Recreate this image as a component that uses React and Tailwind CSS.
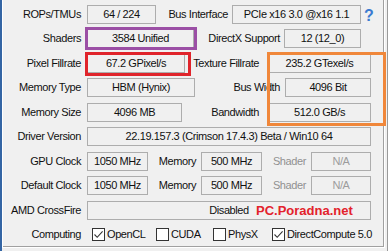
const Field = ({ className = "", children, muted }) => (
    <div className={`relative h-[19px] shrink-0 border border-[#adadad] flex items-center justify-center whitespace-nowrap ${muted ? "text-[#9c9c9c]" : "text-[#111]"} ${className}`}>
        {children}
    </div>
)

const Label = ({ className = "", children, muted }) => (
    <div className={`shrink-0 text-right whitespace-nowrap ${muted ? "text-[#909090]" : "text-[#111]"} ${className}`}>
        {children}
    </div>
)

const Row = ({ children }) => <div className="flex items-center h-[24.5px]">{children}</div>

const Check = ({ checked, label, className = "" }) => (
    <div className={`flex items-center shrink-0 ${className}`}>
        <div className="w-[13px] h-[13px] border border-[#333] bg-white flex items-center justify-center">
            {checked && (
                <svg width="11" height="11" viewBox="0 0 11 11">
                    <path d="M1.5 5.5 L4.2 8.3 L9.6 2.4" fill="none" stroke="#333" strokeWidth="1.1" />
                </svg>
            )}
        </div>
        <span className="ml-[2px] text-[#111]">{label}</span>
    </div>
)

const App = () => {
    return (
        <div className="relative w-[388px] h-[251px] bg-[#f0f0f0] flex overflow-hidden font-['Liberation_Sans',Arial,sans-serif] text-[11px] leading-[13px] tracking-[-0.4px]">
            <div className="w-[2px] shrink-0 bg-[#3465a4]" />
            <div className="w-[383px] h-[248px] shrink-0 border-l border-r border-b border-white">
                <div className="h-full border-r border-b border-[#a0a0a0] pt-[1.75px]">
                    <Row>
                        <Label className="w-[78px]">ROPs/TMUs</Label>
                        <Field className="ml-[6px] w-[69px]">64 / 224</Field>
                        <Label className="w-[72px]">Bus Interface</Label>
                        <Field className="ml-[4px] w-[129px]">PCIe x16 3.0 @x16 1.1</Field>
                        <div className="ml-[3px] mt-[3px] text-[16px] font-bold text-[#3b7bd0] tracking-normal">?</div>
                    </Row>
                    <Row>
                        <Label className="w-[78px]">Shaders</Label>
                        <Field className="ml-[6px] w-[107px]">3584 Unified</Field>
                        <Label className="w-[86px]">DirectX Support</Label>
                        <Field className="ml-[4px] w-[77px]">12 (12_0)</Field>
                    </Row>
                    <Row>
                        <Label className="w-[78px]">Pixel Fillrate</Label>
                        <Field className="ml-[6px] w-[98px]">67.2 GPixel/s</Field>
                        <Label className="w-[74px]">Texture Fillrate</Label>
                        <Field className="ml-[9px] w-[103px]">235.2 GTexel/s</Field>
                    </Row>
                    <Row>
                        <Label className="w-[78px]">Memory Type</Label>
                        <Field className="ml-[6px] w-[108px]">HBM (Hynix)</Field>
                        <Label className="w-[85px]">Bus Width</Label>
                        <Field className="ml-[5px] w-[86px]">4096 Bit</Field>
                    </Row>
                    <Row>
                        <Label className="w-[78px]">Memory Size</Label>
                        <Field className="ml-[6px] w-[95px]">4096 MB</Field>
                        <Label className="w-[77px]">Bandwidth</Label>
                        <Field className="ml-[9px] w-[103px]">512.0 GB/s</Field>
                    </Row>
                    <Row>
                        <Label className="w-[78px]">Driver Version</Label>
                        <Field className="ml-[6px] w-[284px]">22.19.157.3 (Crimson 17.4.3) Beta / Win10 64</Field>
                    </Row>
                    <Row>
                        <Label className="w-[78px]">GPU Clock</Label>
                        <Field className="ml-[6px] w-[61px]">1050 MHz</Field>
                        <Label className="w-[48px]">Memory</Label>
                        <Field className="ml-[5px] w-[61px]">500 MHz</Field>
                        <Label className="w-[44px]" muted>Shader</Label>
                        <Field className="ml-[5px] w-[60px]" muted>N/A</Field>
                    </Row>
                    <Row>
                        <Label className="w-[78px]">Default Clock</Label>
                        <Field className="ml-[6px] w-[61px]">1050 MHz</Field>
                        <Label className="w-[48px]">Memory</Label>
                        <Field className="ml-[5px] w-[61px]">500 MHz</Field>
                        <Label className="w-[44px]" muted>Shader</Label>
                        <Field className="ml-[5px] w-[60px]" muted>N/A</Field>
                    </Row>
                    <Row>
                        <Label className="w-[78px]">AMD CrossFire</Label>
                        <Field className="ml-[6px] w-[284px]">
                            Disabled
                            <span className="absolute left-[168px] top-[1px] text-[13px] leading-[16px] font-bold tracking-normal text-[#e3222b]">PC.Poradna.net</span>
                        </Field>
                    </Row>
                    <Row>
                        <Label className="w-[78px]">Computing</Label>
                        <Check className="ml-[11px] w-[64px]" checked label="OpenCL" />
                        <Check className="w-[57px]" label="CUDA" />
                        <Check className="w-[59px]" label="PhysX" />
                        <Check checked label="DirectCompute 5.0" />
                    </Row>
                </div>
            </div>
            <div className="w-[2px] shrink-0" />
            <div className="w-[1px] shrink-0 bg-[#9a9a9a]" />

            {/* hand-drawn highlight boxes */}
            <div className="absolute left-[85px] top-[27px] w-[112px] h-[23px] border-[3px] border-[#9b4fa5]" />
            <div className="absolute left-[85px] top-[52px] w-[106px] h-[24px] border-[3px] border-[#e0242b]" />
            <div className="absolute left-[267px] top-[52px] w-[119px] h-[74px] border-[3px] border-[#f0873a]" />
        </div>
    )
}

export default App
